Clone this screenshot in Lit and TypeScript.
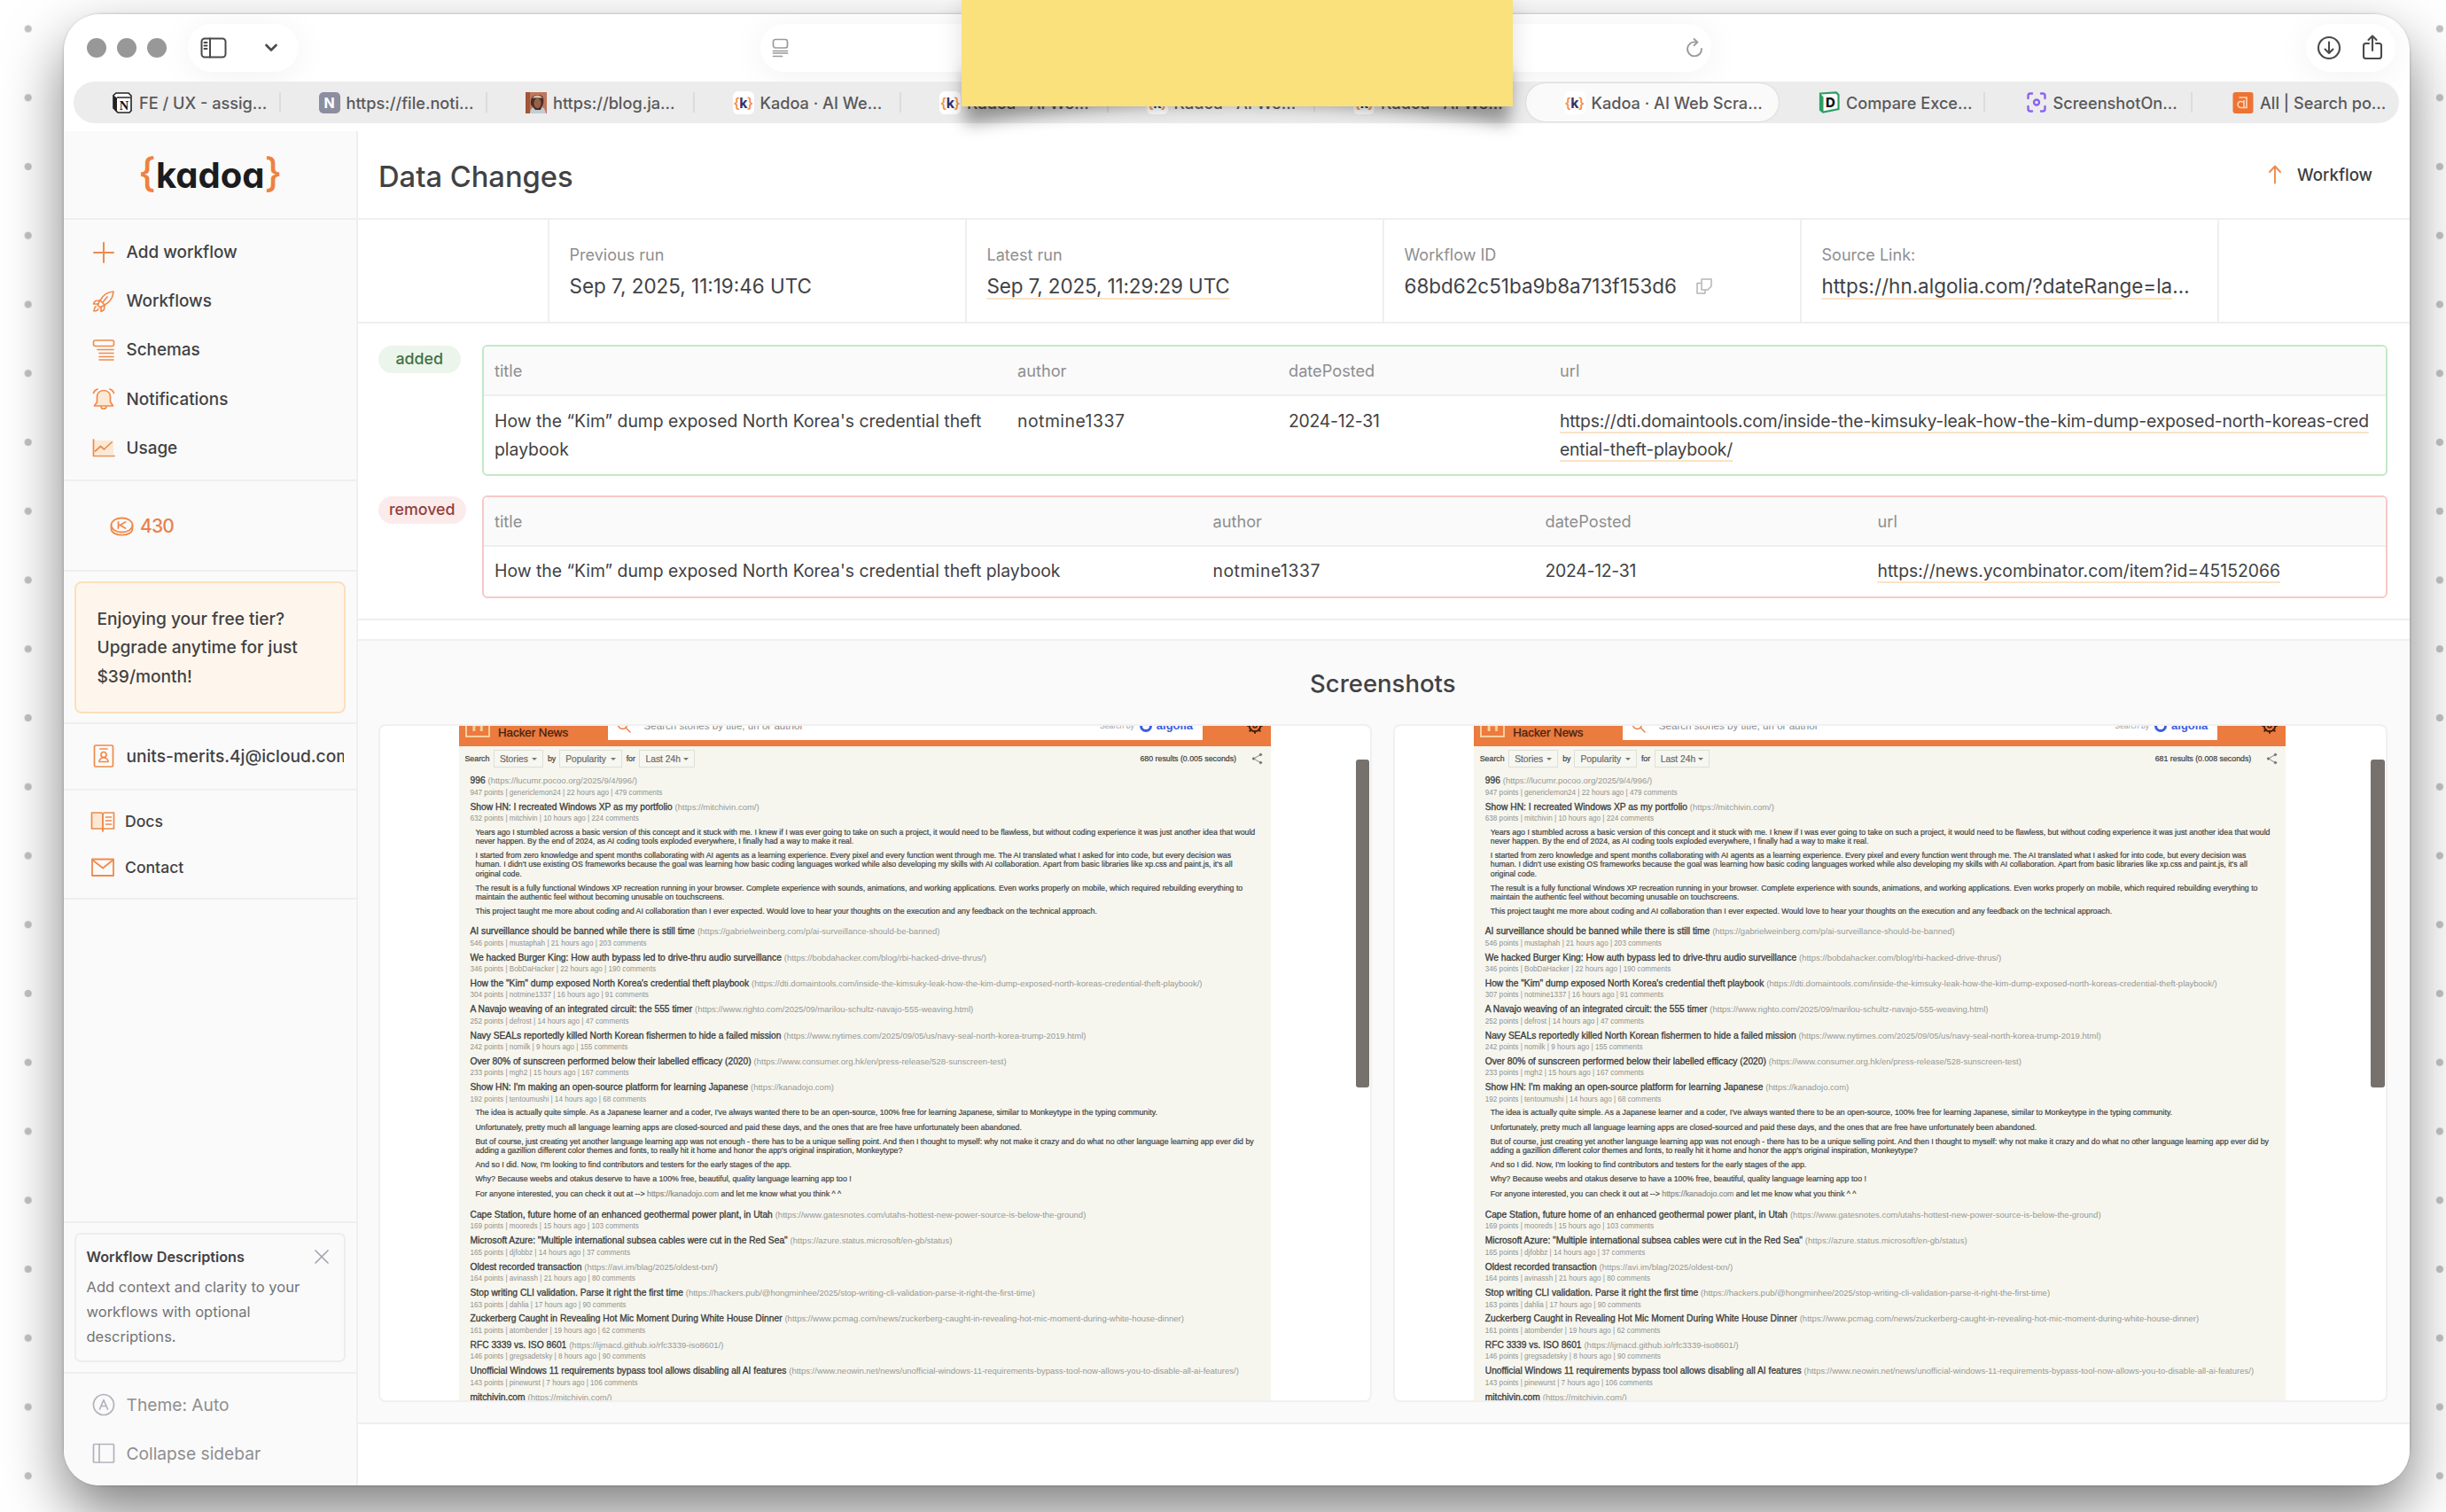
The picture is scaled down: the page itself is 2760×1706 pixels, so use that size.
import { LitElement, html, css, svg } from "lit";
import { customElement, property } from "lit/decorators.js";
import { classMap } from "lit/directives/class-map.js";

/* ---------- icons ---------- */

const line = (w: number, h: number, body: unknown, sw = 1.7) => html`<svg
  width=${w}
  height=${h}
  viewBox="0 0 ${w} ${h}"
  fill="none"
  stroke="currentColor"
  stroke-width=${sw}
  stroke-linecap="round"
  stroke-linejoin="round"
>${body}</svg>`;

const icons: Record<string, unknown> = {
  plus: line(26, 26, svg`<path d="M13 2v22M2 13h22"/>`, 2),
  rocket: line(26, 26, svg`<path d="M9 12C12 6 17 2.500 24 2c-.5 7-4 12-10 15z"/><path d="M9 12l-5 .5C2.500 13 2 14.500 1.500 16L7 16M14 17l-.5 5c-.5 1.500-2 2-3.500 2.500L10 19"/><path d="M9 12l-3 5 3 3 5-3M4 19c-1.500 1-2 3-2 5 2 0 4-.5 5-2"/><path d="M17 8l-5 6"/>`, 1.7),
  schema: line(26, 26, svg`<rect x="1.500" y="2" width="23" height="6.500" rx="2"/><path d="M6 12.500h18M8 16.500h16M8 20.500h16M8 24h16"/>`, 1.6),
  bell: line(26, 26, svg`<path d="M13 3.500c-5 0-7.500 3.500-7.500 7.500v5.500L2.500 21h21l-3-4.500V11c0-4-2.500-7.500-7.500-7.500z" fill="#fbe9d6"/><path d="M10 22c.5 3 5.500 3 6 0M1.500 6.500C2 4.500 3.500 3 6 2M24.500 6.500C24 4.500 22.500 3 20 2"/>`, 1.7),
  chart: line(26, 24, svg`<path d="M2 4h22v16H2z" fill="#fbe9d6" stroke="none"/><path d="M1.500 3v18.500h23.500"/><path d="M3.500 16l6-5.500 4 3.500 8.500-8"/>`, 1.7),
  coin: line(27, 24, svg`<ellipse cx="13.500" cy="10.500" rx="12" ry="8"/><path d="M1.500 11v3.500c0 9.500 24 9.500 24 0V11"/><path d="M9.500 7v7M17.500 7l-6 3.500 6 3.500M9.500 10.500h3"/>`, 1.8),
  user: line(26, 28, svg`<rect x="2.500" y="2" width="21" height="24" rx="1.500"/><path d="M9 6h8"/><circle cx="13" cy="12.500" r="3"/><path d="M8 20.500c0-6 10-6 10 0z"/>`, 1.7),
  book: line(28, 26, svg`<path d="M1.500 3h11l1.500 1.500V22l-1.500-1H1.500z" fill="#fbe9d6"/><path d="M26.500 3h-11L14 4.500V24M26.500 3v18h-11L14 22"/><path d="M17.500 8h6M17.500 12h6M17.500 16h6"/>`, 1.7),
  mail: line(28, 22, svg`<rect x="2" y="1.500" width="24" height="18.500"/><path d="M2 2l12 9.500L26 2"/>`, 1.8),
  theme: line(26, 26, svg`<circle cx="13" cy="13" r="11.500"/><path d="M8.500 18L13 7.500 17.500 18M10 14.500h6"/>`, 1.7),
  collapse: line(26, 24, svg`<rect x="1.500" y="1.500" width="23" height="20.500" rx="1"/><path d="M8 1.500V22"/>`, 1.7),
  close: line(16, 16, svg`<path d="M1 1l14 14M15 1L1 15"/>`, 1.7),
  arrowUp: line(16, 22, svg`<path d="M8 20.500V2M2 8l6-6.500L14 8"/>`, 1.9),
  copy: line(20, 20, svg`<path d="M7 2h11v8l-4 4H7z"/><path d="M6 6.500H2V18h9v-3.500"/>`, 1.5),
  sidebar: line(30, 24, svg`<rect x="1.500" y="1.500" width="27" height="21" rx="3.500"/><path d="M11 1.500v21M4.500 6h3M4.500 9.500h3M4.500 13h3"/>`, 2),
  chevron: line(14, 10, svg`<path d="M1.500 2L7 7.500 12.500 2"/>`, 2.6),
  reader: line(20, 22, svg`<rect x="1.500" y="1.500" width="16" height="9.500" rx="2.500"/><path d="M1.500 14.500h16M1.500 17h16M1.500 20.500h10"/>`, 1.7),
  reload: line(22, 24, svg`<path d="M12.500 5.500A8 8 0 1 0 19 13"/><path d="M10.500 2l4 3.600-4 3.600"/>`, 1.9),
  download: line(28, 28, svg`<circle cx="14" cy="14" r="12"/><path d="M14 7.500v12M9.500 15.500l4.500 4.500 4.500-4.500"/>`, 2.1),
  share: line(24, 30, svg`<path d="M8 10H4.500C3 10 2 11 2 12.500v12C2 26 3 27 4.500 27h15c1.500 0 2.500-1 2.500-2.500v-12C22 11 21 10 19.500 10H16"/><path d="M12 18V2M7.500 6L12 1.500 16.500 6"/>`, 2.1),
  search: line(16, 16, svg`<circle cx="6.500" cy="6.500" r="5"/><path d="M10.500 10.500l4.500 4.500"/>`, 1.4),
  gear: line(18, 18, svg`<circle cx="9" cy="9" r="6.300" stroke-width="2"/><circle cx="9" cy="9" r="2"/><path d="M9 1v2M9 15v2M1 9h2M15 9h2M3.300 3.300l1.400 1.400M13.300 13.300l1.400 1.400M3.300 14.700l1.400-1.400M13.300 4.700l1.400-1.400" stroke-width="2"/>`, 1.5),
  nodes: line(13, 14, svg`<path d="M10.500 2.500L2.500 7l8 4.500"/><circle cx="10.500" cy="2.500" r="1.200" fill="currentColor"/><circle cx="2.500" cy="7" r="1.200" fill="currentColor"/><circle cx="10.500" cy="11.500" r="1.200" fill="currentColor"/>`, 0.9),
};

/* ---------- favicons ---------- */

const favicons: Record<string, unknown> = {
  notion: html`<svg class="fav" width="22" height="24" viewBox="0 0 22 24"><path d="M1 3.500L4 1h14l3 3v17l-2 2H6l-5-5z" fill="#fff" stroke="#222" stroke-width="1.600"/><path d="M1 3.500l4 3V23l-4-5z" fill="#222"/><path d="M5 6h15" stroke="#222" stroke-width="1.500"/><text x="13" y="19.500" font-size="14.500" font-weight="700" text-anchor="middle" font-family="Liberation Serif" fill="#111">N</text></svg>`,
  gray: html`<span class="fav sq gray">N</span>`,
  photo: html`<svg class="fav" width="24" height="24" viewBox="0 0 24 24"><rect width="24" height="24" fill="#c0765a"/><path d="M0 0h5v24H0z" fill="#a1553a"/><path d="M5 24c0-6 4-8 9-8s8 2 9 8z" fill="#c3ccd4"/><path d="M6 14c-1-7 2-11 8-11s7 4 6 10l-3 7h-6z" fill="#4a2e26"/><ellipse cx="13.500" cy="12.500" rx="4" ry="5.500" fill="#9a6149"/><path d="M8 6.500c2-4 9-4 11 0z" fill="#d9c2ac"/></svg>`,
  kadoa: html`<span class="fav kd"><i>{</i><b>k</b><i>}</i></span>`,
  docs: html`<svg class="fav" width="24" height="25" viewBox="0 0 24 25"><path d="M2 2.500L20 1.500 22.500 4v16L5 23.500 2 21z" fill="#fff" stroke="#2f9e63" stroke-width="2.200"/><path d="M2 2.500l3.500 4V23L2 21z" fill="#2f9e63"/><text x="13.500" y="18" font-size="15" font-weight="800" text-anchor="middle" font-family="Inter" fill="#111">D</text></svg>`,
  shot: html`<svg class="fav" width="22" height="23" viewBox="0 0 22 23" fill="none" stroke="#8a63f0" stroke-width="2.400" stroke-linecap="round"><path d="M1.500 7V4c0-1.500 1-2.500 2.500-2.500h2M16 1.500h2c1.500 0 2.500 1 2.500 2.500v3M1.500 16v3c0 1.500 1 2.500 2.500 2.500h2M16 21.500h2c1.500 0 2.500-1 2.500-2.500v-3"/><circle cx="11" cy="11.500" r="3"/></svg>`,
  hn: html`<svg class="fav" width="23" height="24" viewBox="0 0 23 24"><rect width="23" height="24" rx="3" fill="#ee7333"/><path d="M7 6h8.500v11.500H9a3.500 3.500 0 1 1 2.500-6M12.500 9v8" fill="none" stroke="#fbd9bd" stroke-width="1.600"/></svg>`,
};

interface Tab { icon: string; label: string; active?: boolean; sep?: boolean; wide?: boolean }

const tabs: Tab[] = [
  { icon: "notion", label: "FE / UX - assig…", sep: true },
  { icon: "gray", label: "https://file.noti…", sep: true },
  { icon: "photo", label: "https://blog.ja…", sep: true },
  { icon: "kadoa", label: "Kadoa · AI We…", sep: true },
  { icon: "kadoa", label: "Kadoa · AI We…", sep: true },
  { icon: "kadoa", label: "Kadoa · AI We…", sep: true },
  { icon: "kadoa", label: "Kadoa · AI We…" },
  { icon: "kadoa", label: "Kadoa · AI Web Scra…", active: true },
  { icon: "docs", label: "Compare Exce…", sep: true, wide: true },
  { icon: "shot", label: "ScreenshotOn…", sep: true, wide: true },
  { icon: "hn", label: "All | Search po…", wide: true },
];

/* ---------- captured page ---------- */

interface Story { title: string; url: string; meta: string; body?: unknown[] }

const capture = (second: boolean): Story[] => [
  { title: "996", url: "https://lucumr.pocoo.org/2025/9/4/996/", meta: "947 points | genericlemon24 | 22 hours ago | 479 comments" },
  {
    title: "Show HN: I recreated Windows XP as my portfolio",
    url: "https://mitchivin.com/",
    meta: `${second ? 638 : 632} points | mitchivin | 10 hours ago | 224 comments`,
    body: [
      ["Years ago I stumbled across a basic version of this concept and it stuck with me. I knew if I was ever going to take on such a project, it would need to be flawless, but without coding experience it was just another idea that would", "never happen. By the end of 2024, as AI coding tools exploded everywhere, I finally had a way to make it real."],
      ["I started from zero knowledge and spent months collaborating with AI agents as a learning experience. Every pixel and every function went through me. The AI translated what I asked for into code, but every decision was", "human. I didn't use existing OS frameworks because the goal was learning how basic coding languages worked while also developing my skills with AI collaboration. Apart from basic libraries like xp.css and paint.js, it's all", "original code."],
      ["The result is a fully functional Windows XP recreation running in your browser. Complete experience with sounds, animations, and working applications. Even works properly on mobile, which required rebuilding everything to", "maintain the authentic feel without becoming unusable on touchscreens."],
      ["This project taught me more about coding and AI collaboration than I ever expected. Would love to hear your thoughts on the execution and any feedback on the technical approach."],
    ],
  },
  { title: "AI surveillance should be banned while there is still time", url: "https://gabrielweinberg.com/p/ai-surveillance-should-be-banned", meta: "546 points | mustaphah | 21 hours ago | 203 comments" },
  { title: "We hacked Burger King: How auth bypass led to drive-thru audio surveillance", url: "https://bobdahacker.com/blog/rbi-hacked-drive-thrus/", meta: "346 points | BobDaHacker | 22 hours ago | 190 comments" },
  { title: "How the \"Kim\" dump exposed North Korea's credential theft playbook", url: "https://dti.domaintools.com/inside-the-kimsuky-leak-how-the-kim-dump-exposed-north-koreas-credential-theft-playbook/", meta: `${second ? 307 : 304} points | notmine1337 | 16 hours ago | 91 comments` },
  { title: "A Navajo weaving of an integrated circuit: the 555 timer", url: "https://www.righto.com/2025/09/marilou-schultz-navajo-555-weaving.html", meta: "252 points | defrost | 14 hours ago | 47 comments" },
  { title: "Navy SEALs reportedly killed North Korean fishermen to hide a failed mission", url: "https://www.nytimes.com/2025/09/05/us/navy-seal-north-korea-trump-2019.html", meta: "242 points | nomilk | 9 hours ago | 155 comments" },
  { title: "Over 80% of sunscreen performed below their labelled efficacy (2020)", url: "https://www.consumer.org.hk/en/press-release/528-sunscreen-test", meta: "233 points | mgh2 | 15 hours ago | 167 comments" },
  {
    title: "Show HN: I'm making an open-source platform for learning Japanese",
    url: "https://kanadojo.com",
    meta: "192 points | tentoumushi | 14 hours ago | 68 comments",
    body: [
      ["The idea is actually quite simple. As a Japanese learner and a coder, I've always wanted there to be an open-source, 100% free for learning Japanese, similar to Monkeytype in the typing community."],
      ["Unfortunately, pretty much all language learning apps are closed-sourced and paid these days, and the ones that are free have unfortunately been abandoned."],
      ["But of course, just creating yet another language learning app was not enough - there has to be a unique selling point. And then I thought to myself: why not make it crazy and do what no other language learning app ever did by", "adding a gazillion different color themes and fonts, to really hit it home and honor the app's original inspiration, Monkeytype?"],
      ["And so I did. Now, I'm looking to find contributors and testers for the early stages of the app."],
      ["Why? Because weebs and otakus deserve to have a 100% free, beautiful, quality language learning app too !"],
      [html`<span class="last">For anyone interested, you can check it out at --&gt; <span class="lk">https://kanadojo.com</span> and let me know what you think ^ ^</span>`],
    ],
  },
  { title: "Cape Station, future home of an enhanced geothermal power plant, in Utah", url: "https://www.gatesnotes.com/utahs-hottest-new-power-source-is-below-the-ground", meta: "169 points | mooreds | 15 hours ago | 103 comments" },
  { title: "Microsoft Azure: \"Multiple international subsea cables were cut in the Red Sea\"", url: "https://azure.status.microsoft/en-gb/status", meta: "165 points | djfobbz | 14 hours ago | 37 comments" },
  { title: "Oldest recorded transaction", url: "https://avi.im/blag/2025/oldest-txn/", meta: "164 points | avinassh | 21 hours ago | 80 comments" },
  { title: "Stop writing CLI validation. Parse it right the first time", url: "https://hackers.pub/@hongminhee/2025/stop-writing-cli-validation-parse-it-right-the-first-time", meta: "163 points | dahlia | 17 hours ago | 90 comments" },
  { title: "Zuckerberg Caught in Revealing Hot Mic Moment During White House Dinner", url: "https://www.pcmag.com/news/zuckerberg-caught-in-revealing-hot-mic-moment-during-white-house-dinner", meta: "161 points | atombender | 19 hours ago | 62 comments" },
  { title: "RFC 3339 vs. ISO 8601", url: "https://ijmacd.github.io/rfc3339-iso8601/", meta: "146 points | gregsadetsky | 8 hours ago | 90 comments" },
  { title: "Unofficial Windows 11 requirements bypass tool allows disabling all AI features", url: "https://www.neowin.net/news/unofficial-windows-11-requirements-bypass-tool-now-allows-you-to-disable-all-ai-features/", meta: "143 points | pinewurst | 7 hours ago | 106 comments" },
  { title: "mitchivin.com", url: "https://mitchivin.com/", meta: "" },
];

@customElement("page-capture")
export class PageCapture extends LitElement {
  @property({ type: Boolean }) second = false;

  static styles = css`
    :host { display: flex; position: relative; box-sizing: border-box; height: 765px; padding-left: 89px; border: 2px solid #f0f0f1; border-radius: 8px; background: #fff; overflow: hidden; font-family: "Liberation Sans", sans-serif; color: #3d3d3b; white-space: nowrap; }
    .shot { width: 916px; background: #f6f6ef; overflow: hidden; }
    .head { display: flex; align-items: center; box-sizing: border-box; height: 47px; margin-top: -24px; padding: 0 9px 0 7px; background: #eb7b3f; }
    .h { width: 28px; height: 27px; box-sizing: border-box; border: 2px solid #fbcf9c; color: #fbcf9c; font: 700 19px/24px "Liberation Sans", sans-serif; text-align: center; }
    .brand { width: 123.500px; margin-left: 9px; font-size: 13.300px; line-height: 15px; color: #43210f; -webkit-text-stroke: 0.3px; }
    .box { display: flex; align-items: center; box-sizing: border-box; width: 671.500px; height: 32px; padding: 0 11px 0 10px; background: #fff; font-size: 11.600px; color: #8a8a8a; }
    .box svg { color: #eb7b3f; margin-right: 15px; }
    .by { margin-left: auto; font-size: 8.600px; color: #a0a0a0; }
    .alg { display: flex; align-items: center; gap: 5px; margin-left: 6px; color: #3c5be0; font: 700 13px/14px "Liberation Sans", sans-serif; }
    .dot { width: 8px; height: 8px; border: 3px solid #3c5be0; border-radius: 7px; }
    .gear { display: flex; margin-left: auto; color: #43210f; }
    .bar { display: flex; align-items: center; height: 28.500px; padding: 0 9px 0 6.500px; font-size: 8.800px; -webkit-text-stroke: 0.2px; }
    .sel { display: flex; align-items: center; justify-content: space-between; box-sizing: border-box; height: 20px; padding: 0 6px; border: 1px solid #dedfd9; font-size: 10.300px; color: #6b6b68; background: #f7f7f2; }
    .sel::after { content: ""; border: 3px solid transparent; border-top-color: #77776f; border-bottom: 0; }
    .s1 { width: 56px; margin: 0 5px 0 4.500px; }
    .s2 { width: 70.500px; margin: 0 5px 0 4px; }
    .s3 { width: 62.500px; margin-left: 4.500px; }
    .res { margin-left: auto; margin-right: 17px; }
    .bar svg { color: #777; }
    .list { padding: 2.700px 0 0 12.500px; }
    .story { height: 26.400px; margin-bottom: 2.970px; }
    .t { height: 16.400px; line-height: 16.400px; font-size: 10.250px; color: #3a3a38; -webkit-text-stroke: 0.3px; }
    .u { font-size: 9.500px; color: #989893; -webkit-text-stroke: 0; }
    .m { height: 10px; line-height: 10px; font-size: 8.170px; color: #92928d; }
    .body { padding: 1.600px 0 9.700px 6px; font-size: 8.790px; line-height: 10.300px; color: #444442; -webkit-text-stroke: 0.2px; }
    .p + .p { margin-top: 5.900px; }
    .l { min-height: 10.300px; }
    .last { display: block; padding: 0.800px 0 0.700px; }
    .lk { color: #8d8d88; }
    .thumb { position: absolute; right: 1px; top: 37.500px; width: 15.500px; height: 370px; border-radius: 3px; background: #77716d; }
  `;

  render() {
    return html`
      <div class="shot">
        <div class="head">
          <div class="h">H</div>
          <div class="brand">Search<br />Hacker News</div>
          <div class="box">
            ${icons.search}<span>Search stories by title, url or author</span>
            <span class="by">Search by</span><span class="alg"><span class="dot"></span>algolia</span>
          </div>
          <div class="gear">${icons.gear}</div>
        </div>
        <div class="bar">
          <span>Search</span><span class="sel s1">Stories</span><span>by</span><span class="sel s2">Popularity</span><span>for</span><span class="sel s3">Last 24h</span>
          <span class="res">${this.second ? "681 results (0.008 seconds)" : "680 results (0.005 seconds)"}</span>
          ${icons.nodes}
        </div>
        <div class="list">
          ${capture(this.second).map((s) => html`
            <div class="story">
              <div class="t">${s.title} <span class="u">(${s.url})</span></div>
              <div class="m">${s.meta}</div>
            </div>
            ${s.body
              ? html`<div class="body">${s.body.map((p) => html`<div class="p">${(p as unknown[]).map((l) => html`<div class="l">${l}</div>`)}</div>`)}</div>`
              : ""}
          `)}
        </div>
      </div>
      <div class="thumb"></div>
    `;
  }
}

/* ---------- page ---------- */

const nav: [string, string][] = [
  ["plus", "Add workflow"],
  ["rocket", "Workflows"],
  ["schema", "Schemas"],
  ["bell", "Notifications"],
  ["chart", "Usage"],
];

@customElement("app-root")
export class AppRoot extends LitElement {
  static styles = css`
    :host { display: block; position: relative; box-sizing: border-box; height: 1706px; padding: 16px 41.500px 30px 72px; overflow: hidden; font-family: Inter, "Liberation Sans", sans-serif; color: #424244; background-color: #fff; white-space: nowrap; }
    svg { display: block; flex: none; }
    .dots { position: absolute; inset: 0; background: radial-gradient(circle, #c3c3c3 3.600px, transparent 4.600px) -7.200px -6.400px / 77.760px 77.760px; }
    .shade { position: absolute; left: 72px; right: 41.500px; top: 16px; bottom: 30px; border-radius: 42px; box-shadow: 0 30px 66px rgba(0, 0, 0, 0.5), 0 0 3px rgba(0, 0, 0, 0.3); }
    .window { position: relative; display: flex; flex-direction: column; height: 1660px; border-radius: 40px; overflow: hidden; background: #fff; }

    .toolbar { display: flex; align-items: center; box-sizing: border-box; height: 76px; padding: 0 15.500px 0 26px; color: #4a4a4a; }
    .lights { display: flex; gap: 12px; }
    .light { width: 22px; height: 22px; border-radius: 50%; background: #989898; }
    .pill { display: flex; align-items: center; box-sizing: border-box; height: 54px; border-radius: 27px; background: #fff; box-shadow: 0 4px 40px rgba(0, 0, 0, 0.06); }
    .p1 { width: 125px; margin-left: 24px; padding: 0 24px 0 14px; justify-content: space-between; }
    .p2 { width: 1073px; margin-left: 521px; padding: 0 8px 0 13px; justify-content: space-between; color: #9a9a9a; }
    .p3 { width: 101px; margin-left: auto; padding: 0 14px 0 12px; justify-content: space-between; }

    .tabs { display: flex; box-sizing: border-box; height: 47px; margin: 0 11.500px 0 11px; border-radius: 24px; background: #ececec; font-size: 18.150px; font-weight: 500; color: #59595a; }
    .tab { display: flex; align-items: center; flex: 1 1 60px; box-sizing: border-box; padding-left: 42px; position: relative; }
    .tab.wide { padding-left: 44.500px; }
    .tab.sep::after { content: ""; position: absolute; right: 0; top: 12px; width: 2px; height: 23px; background: #dcdcdc; }
    .tab.active { flex: 0 0 285px; margin: 2px 0 2px 4px; border-radius: 22px; background: #fafafa; box-shadow: 0 0 2px rgba(0, 0, 0, 0.18); }
    .fav { flex: none; display: block; box-sizing: border-box; width: 24px; margin: 0 7px 0 1px; }
    .sq { height: 24px; border-radius: 5px; font: 700 16px/24px Inter, sans-serif; text-align: center; }
    .gray { background: #8d8da0; color: #fff; }
    .kd { display: flex; align-items: center; justify-content: center; height: 26px; border-radius: 6px; background: #fff; font: 600 16px/24px Inter, sans-serif; letter-spacing: -0.6px; }
    .kd b { color: #30316b; font-weight: 700; }
    .kd i { color: #f0934f; font-style: normal; font-weight: 600; }

    .app { display: flex; flex: 1; margin-top: 9px; min-height: 0; }
    .side { display: flex; flex-direction: column; flex: none; box-sizing: border-box; width: 331.500px; border-right: 2px solid #efeff1; background: #fafafa; font-size: 18.900px; font-weight: 500; }
    .logo { display: flex; align-items: center; justify-content: center; box-sizing: border-box; height: 100px; padding: 2px 0 0 1px; border-bottom: 2px solid #efeff1; font-size: 40px; font-weight: 700; color: #1c1c1e; font-feature-settings: "cv11"; line-height: 50px; }
    .brace { display: flex; justify-content: center; width: 20px; padding-bottom: 6px; color: #ee8140; font-size: 45px; font-weight: 500; }
    .group { box-sizing: border-box; border-bottom: 2px solid #efeff1; flex: none; }
    .nav { height: 295px; padding-top: 9px; }
    .item { display: flex; align-items: center; height: 55.200px; padding-left: 32px; }
    .ic { display: flex; justify-content: center; flex: none; width: 26px; margin-right: 12.500px; color: #f08a4b; }
    .credits { display: flex; align-items: center; height: 102px; padding: 1px 0 0 52px; gap: 7px; color: #e9814f; }
    .credits svg { color: #f08a4b; }
    .num { font-size: 21px; letter-spacing: -0.8px; }
    .upsell { height: 172px; padding: 11px 12px 0 12px; }
    .offer { box-sizing: border-box; height: 149px; padding: 24px 23.500px; border: 2px solid #fbdfbd; border-radius: 8px; background: #fef6ec; font-size: 19.150px; line-height: 32.400px; }
    .mailrow { height: 74.500px; padding: 8px 14px 0 0; font-size: 19.150px; }
    .mailrow .t { overflow: hidden; }
    .help { height: 123.500px; padding: 9px 0 0 0; font-size: 17.600px; }
    .help .item { height: 52px; padding-left: 30px; }
    .help .ic { width: 28px; margin-right: 11px; }
    .gap { flex: 1; border-bottom: 2px solid #efeff1; }
    .tipwrap { height: 170px; padding: 10.500px 12px 0 12px; }
    .tip { box-sizing: border-box; height: 146px; padding: 11.500px 11.500px; border: 2px solid #ededee; border-radius: 7px; font-size: 16.550px; line-height: 28px; font-weight: 400; color: #747476; }
    .tt { display: flex; justify-content: space-between; align-items: center; height: 28px; margin-bottom: 6px; font-weight: 600; font-size: 16.200px; color: #424244; }
    .tt svg { color: #a5a5b0; margin: -1px 5px 0 0; }
    .foot { height: 126px; padding-top: 7px; box-sizing: border-box; font-weight: 400; font-size: 19.200px; color: #8e8e90; }
    .foot .ic { color: #b2b2be; }
    .foot .item { height: 55.500px; }

    .main { flex: 1; min-width: 0; display: flex; flex-direction: column; background: #fff; }
    .top { display: flex; align-items: center; justify-content: space-between; box-sizing: border-box; height: 100px; padding: 0 41.500px 0 23.500px; border-bottom: 2px solid #efeff1; }
    h1 { margin: 3px 0 0; font-size: 32.700px; font-weight: 500; }
    .back { display: flex; align-items: center; gap: 17px; font-size: 18.620px; font-weight: 500; color: #3d3d3f; }
    .back svg { color: #f08a4b; }
    .meta { display: flex; justify-content: center; box-sizing: border-box; height: 117px; border-bottom: 2px solid #efeff1; flex: none; }
    .cell { box-sizing: border-box; width: 471px; padding: 25px 0 0 22.500px; border-left: 2px solid #efeff1; }
    .cell:last-child { width: 473px; border-right: 2px solid #efeff1; }
    .k { height: 30px; line-height: 30px; font-size: 18.050px; color: #8e8e90; }
    .v { display: flex; align-items: center; height: 40px; font-size: 22.450px; line-height: 26px; }
    .v svg { margin-left: 21px; color: #b5b5b7; }
    .ts { letter-spacing: -0.120px; }
    .ul { text-decoration: underline; text-decoration-color: #fbe2c6; text-decoration-thickness: 2px; text-underline-offset: 5px; text-decoration-skip-ink: none; }

    .changes { box-sizing: border-box; display: flex; flex-direction: column; gap: 21.500px; height: 335px; padding: 24px 25px 0 23px; border-bottom: 2px solid #efeff1; flex: none; }
    .change { display: flex; align-items: flex-start; }
    .tag { width: 117.500px; padding-top: 1px; }
    .badge { display: inline-block; box-sizing: border-box; height: 31px; padding: 0 12.500px; border-radius: 16px; font-size: 17.800px; line-height: 30px; font-weight: 500; }
    .added .badge { background: #ebf5ec; color: #3f7045; padding: 0 20px; }
    .removed .badge { background: #fcebeb; color: #923f3b; }
    .table { flex: 1; border: 2px solid #c3e8c7; border-radius: 6px; overflow: hidden; box-sizing: border-box; }
    .removed .table { border-color: #f6c9c7; }
    .row { display: grid; padding: 0 0 0 12px; }
    .added .row { grid-template-columns: 590px 306px 306px 1fr; }
    .removed .row { grid-template-columns: 810.500px 375px 375px 1fr; }
    .hd { height: 54px; line-height: 55px; background: #fafafa; border-bottom: 2px solid #efeff1; font-size: 18.200px; color: #8e8e90; }
    .bd { font-size: 19.380px; line-height: 32px; padding-top: 11.500px; }
    .added .bd { height: 76.500px; }
    .removed .bd { height: 44.500px; }
    .au { letter-spacing: 0.500px; }
    .dt { letter-spacing: -0.250px; }
    .long { letter-spacing: -0.200px; }

    .strip { height: 23px; border-bottom: 2px solid #efeff1; flex: none; box-sizing: border-box; }
    .shots { box-sizing: border-box; height: 884px; padding: 23px 25px 0 23.500px; background: #fafafa; border-bottom: 2px solid #efeff1; flex: none; }
    h2 { margin: 0; height: 50px; line-height: 50px; text-align: center; font-size: 27.500px; font-weight: 500; }
    .pair { display: grid; grid-template-columns: 1fr 1fr; gap: 24px; margin-top: 21px; }

    .note { position: absolute; left: 1085px; top: 0; width: 622px; height: 120px; background: #fae17c; box-shadow: 0 0 26px rgba(0, 0, 0, 0.13); }
    .curl { position: absolute; left: 1055px; top: 60px; }
  `;

  render() {
    return html`
      <div class="dots"></div>
      <div class="shade"></div>
      <div class="window">
        <div class="toolbar">
          <div class="lights"><div class="light"></div><div class="light"></div><div class="light"></div></div>
          <div class="pill p1">${icons.sidebar}${icons.chevron}</div>
          <div class="pill p2">${icons.reader}${icons.reload}</div>
          <div class="pill p3">${icons.download}${icons.share}</div>
        </div>
        <div class="tabs">
          ${tabs.map((t) => html`<div class=${classMap({ tab: true, active: !!t.active, sep: !!t.sep, wide: !!t.wide })}>${favicons[t.icon]}<span>${t.label}</span></div>`)}
        </div>
        <div class="app">
          ${this.sidebar()}
          <div class="main">
            <div class="top"><h1>Data Changes</h1><div class="back">${icons.arrowUp}<span>Workflow</span></div></div>
            <div class="meta">
              <div class="cell"><div class="k">Previous run</div><div class="v">Sep 7, 2025, 11:19:46 UTC</div></div>
              <div class="cell"><div class="k">Latest run</div><div class="v"><span class="ul ts">Sep 7, 2025, 11:29:29 UTC</span></div></div>
              <div class="cell"><div class="k">Workflow ID</div><div class="v">68bd62c51ba9b8a713f153d6${icons.copy}</div></div>
              <div class="cell"><div class="k">Source Link:</div><div class="v"><span class="ul">https://hn.algolia.com/?dateRange=la</span>…</div></div>
            </div>
            <div class="changes">
              <div class="change added">
                <div class="tag"><span class="badge">added</span></div>
                <div class="table">
                  <div class="row hd"><div>title</div><div>author</div><div>datePosted</div><div>url</div></div>
                  <div class="row bd">
                    <div>How the “Kim” dump exposed North Korea's credential theft<br />playbook</div>
                    <div class="au">notmine1337</div>
                    <div class="dt">2024-12-31</div>
                    <div class="long"><span class="ul">https://dti.domaintools.com/inside-the-kimsuky-leak-how-the-kim-dump-exposed-north-koreas-cred<br />ential-theft-playbook/</span></div>
                  </div>
                </div>
              </div>
              <div class="change removed">
                <div class="tag"><span class="badge">removed</span></div>
                <div class="table">
                  <div class="row hd"><div>title</div><div>author</div><div>datePosted</div><div>url</div></div>
                  <div class="row bd">
                    <div>How the “Kim” dump exposed North Korea's credential theft playbook</div>
                    <div class="au">notmine1337</div>
                    <div class="dt">2024-12-31</div>
                    <div><span class="ul">https://news.ycombinator.com/item?id=45152066</span></div>
                  </div>
                </div>
              </div>
            </div>
            <div class="strip"></div>
            <div class="shots">
              <h2>Screenshots</h2>
              <div class="pair"><page-capture></page-capture><page-capture second></page-capture></div>
            </div>
          </div>
        </div>
      </div>
      <svg class="curl" width="682" height="120" viewBox="0 0 682 120">
        <defs><filter id="soft" x="-10%" y="-60%" width="120%" height="220%"><feGaussianBlur stdDeviation="9" /></filter></defs>
        <path d="M34 20H648V81Q500 57 341 53Q182 57 34 81Z" fill="#000" fill-opacity="0.34" filter="url(#soft)" />
      </svg>
      <div class="note"></div>
    `;
  }

  private item(icon: string, label: string) {
    return html`<div class="item"><span class="ic">${icons[icon]}</span><span class="t">${label}</span></div>`;
  }

  private sidebar() {
    return html`
      <div class="side">
        <div class="logo"><span class="brace">{</span><span>kadoa</span><span class="brace">}</span></div>
        <div class="group nav">${nav.map(([i, l]) => this.item(i, l))}</div>
        <div class="group credits">${icons.coin}<span class="num">430</span></div>
        <div class="group upsell"><div class="offer">Enjoying your free tier?<br />Upgrade anytime for just<br />$39/month!</div></div>
        <div class="group mailrow">${this.item("user", "units-merits.4j@icloud.com")}</div>
        <div class="group help">${this.item("book", "Docs")}${this.item("mail", "Contact")}</div>
        <div class="gap"></div>
        <div class="group tipwrap">
          <div class="tip">
            <div class="tt"><span>Workflow Descriptions</span>${icons.close}</div>
            Add context and clarity to your<br />workflows with optional<br />descriptions.
          </div>
        </div>
        <div class="foot">${this.item("theme", "Theme: Auto")}${this.item("collapse", "Collapse sidebar")}</div>
      </div>
    `;
  }
}
